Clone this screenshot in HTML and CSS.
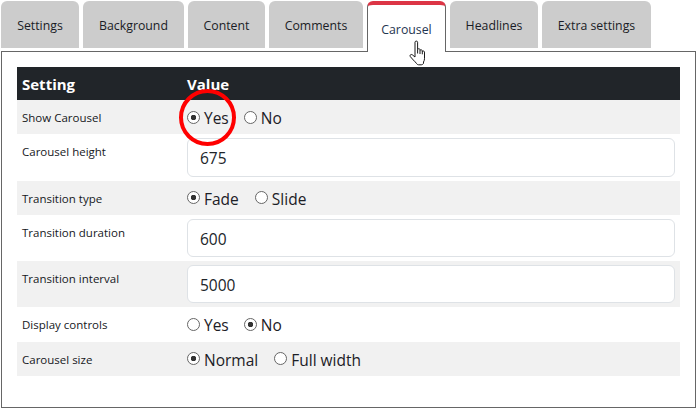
FILE: index.html
```html
<!DOCTYPE html>
<html lang="en">

<head>
    <meta charset="UTF-8">
    <title>Carousel settings</title>
    <link rel="stylesheet" href="styles.css">
</head>

<body>

    <div class="tabs">
        <a class="tab tab-settings">Settings</a>
        <a class="tab tab-background">Background</a>
        <a class="tab tab-content">Content</a>
        <a class="tab tab-comments">Comments</a>
        <a class="tab tab-carousel active">Carousel</a>
        <a class="tab tab-headlines">Headlines</a>
        <a class="tab tab-extra">Extra settings</a>
    </div>

    <div class="panel">
        <div class="grid-head">
            <div>Setting</div>
            <div>Value</div>
        </div>
        <div class="row">
            <div class="name">Show Carousel</div>
            <div class="value">
                <label class="opt gap-yes"><input type="radio" name="show" checked>Yes</label>
                <label class="opt"><input type="radio" name="show">No</label>
            </div>
        </div>
        <div class="row">
            <div class="name">Carousel height</div>
            <div class="value"><input class="field" type="text" value="675"></div>
        </div>
        <div class="row">
            <div class="name">Transition type</div>
            <div class="value">
                <label class="opt gap-fade"><input type="radio" name="type" checked>Fade</label>
                <label class="opt"><input type="radio" name="type">Slide</label>
            </div>
        </div>
        <div class="row">
            <div class="name">Transition duration</div>
            <div class="value"><input class="field" type="text" value="600"></div>
        </div>
        <div class="row">
            <div class="name">Transition interval</div>
            <div class="value"><input class="field" type="text" value="5000"></div>
        </div>
        <div class="row">
            <div class="name">Display controls</div>
            <div class="value">
                <label class="opt gap-yes"><input type="radio" name="controls">Yes</label>
                <label class="opt"><input type="radio" name="controls" checked>No</label>
            </div>
        </div>
        <div class="row">
            <div class="name">Carousel size</div>
            <div class="value">
                <label class="opt gap-normal"><input type="radio" name="size" checked>Normal</label>
                <label class="opt"><input type="radio" name="size">Full width</label>
            </div>
        </div>
    </div>

    <!-- annotations over the screenshot -->
    <div class="red-circle"></div>
    <svg class="hand" width="20" height="26" viewBox="0 0 20 26">
        <path d="M6 2.200c0-1.500 2.600-1.500 2.600 0v7.300c0-1 2.400-1 2.400.2v.8c0-1 2.300-.9 2.300.3v.8c0-.9 2.200-.8 2.200.5v6.600c0 1.400-.5 2.300-1 3.300v1.400c-.5 1-1.500 1.400-2.500 1.400H9.600c-1 0-1.600-.6-2-1.200-.8-1.300-2-2.200-3.300-3.600L1.300 16.600c-.9-1.300.6-2.800 2-1.800L6 17V2.200z" fill="#fff" stroke="#1a1a1a" stroke-width="1" stroke-linejoin="round"/>
        <path d="M8.600 9.500v4M11 10.500v3.500M13.300 11.300v3" fill="none" stroke="#1a1a1a" stroke-width="1"/>
    </svg>

</body>

</html>
```
FILE: styles.css
```css
* {
    box-sizing: border-box;
}

html,
body {
    height: 408px;
}

body {
    margin: 0;
    position: relative;
    overflow: hidden;
    background: #fff;
    color: #212529;
    font-family: "Open Sans", "Noto Sans", Arial, sans-serif;
}

.tabs {
    display: flex;
    gap: 4px;
    height: 52px;
    padding: 1px 0 0 1px;
}

.tab {
    display: block;
    height: 47px;
    background: #ccc;
    border-radius: 6px 6px 0 0;
    font-size: 12.3px;
    font-weight: 500;
    line-height: 50px;
    text-align: center;
    white-space: nowrap;
    color: #1a1c26;
}

.tab-settings {
    width: 78px;
}

.tab-background {
    width: 101px;
}

.tab-content {
    width: 77px;
}

.tab-comments {
    width: 94px;
}

.tab-carousel {
    width: 79px;
}

.tab-headlines {
    width: 88px;
}

.tab-extra {
    width: 109px;
}

.tab.active {
    position: relative;
    z-index: 1;
    height: 51px;
    background: #fff;
    border: 1px solid #666;
    border-top: 4px solid #dc3545;
    border-bottom: none;
    line-height: 50px;
    font-weight: 400;
    color: #1f3550;
}

.panel {
    height: 357px;
    margin: -1px 0 0 1px;
    padding: 15px 15px 0 15px;
    border: 1px solid #666;
}

.grid-head,
.row {
    display: grid;
    grid-template-columns: 165px 498px;
}

.grid-head {
    height: 33px;
    padding: 2px 5px 0;
    column-gap: 10px;
    grid-template-columns: 155px 1fr;
    background: #212529;
    color: #fff;
    font-size: 15px;
    font-weight: 700;
    line-height: 31px;
}

.row:nth-child(even) {
    background: #f1f1f1;
}

.name {
    padding: 9px 5px 0;
    font-size: 11.5px;
    line-height: 18px;
    color: #16181c;
}

.value {
    padding: 6px 5px 4px;
    font-size: 15.5px;
    line-height: 24.3px;
}

.value:has(.field) {
    padding: 4px 5px;
}

.opt {
    display: inline-flex;
    align-items: center;
    vertical-align: top;
    color: #1c2026;
}

.gap-yes {
    margin-right: 11px;
}

.gap-fade {
    margin-right: 12px;
}

.gap-normal {
    margin-right: 12px;
}

.opt input {
    appearance: none;
    width: 13px;
    height: 13px;
    margin: -2px 4px 0 0;
    border: 1px solid #666;
    border-radius: 50%;
    background: #fff;
}

.opt input:checked {
    background: radial-gradient(circle, #333 0 2.500px, #fff 3px);
}

.field {
    display: block;
    width: 488px;
    height: 38.3px;
    padding: 2px 12px 0;
    border: 1px solid #dee2e6;
    border-radius: 6px;
    background: #fff;
    color: #212529;
    font-family: inherit;
    font-size: 15.5px;
}

.red-circle {
    position: absolute;
    left: 179px;
    top: 89px;
    width: 57px;
    height: 57px;
    border: 4px solid #f00;
    border-radius: 50%;
}

.hand {
    position: absolute;
    left: 409px;
    top: 40px;
    z-index: 2;
}
```
